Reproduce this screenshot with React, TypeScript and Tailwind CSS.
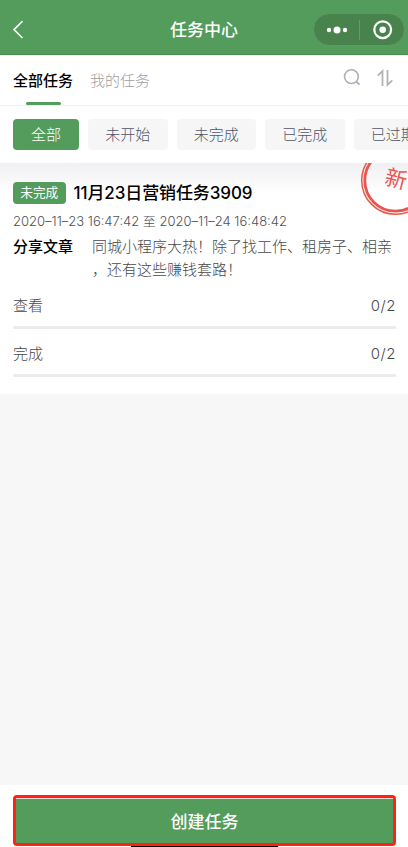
import clsx from 'clsx'

const filters = ['全部', '未开始', '未完成', '已完成', '已过期']

const progress = [
  { label: '查看', value: 0, total: 2 },
  { label: '完成', value: 0, total: 2 },
]

function Header() {
  return (
    <header className="relative flex h-[55px] shrink-0 items-center justify-center border-b border-[#45944b] bg-[#549c5b] pt-1 text-white">
      <svg className="absolute left-[12px] top-[20px]" width="12" height="19" viewBox="0 0 12 19" fill="none" stroke="currentColor" strokeWidth="1.6">
        <path d="M10.500 1.200 2 9.600l8.500 8.400" />
      </svg>
      <h1 className="pt-[1px] text-[17px] leading-6 font-medium">任务中心</h1>
      <div className="absolute left-[313px] top-[13px] flex h-[33px] w-[92px] items-center rounded-full border border-[#5d9a62] bg-[#48824d]">
        <svg width="90" height="31" viewBox="0 0 90 31" fill="currentColor">
          <circle cx="15" cy="16" r="2.200" />
          <circle cx="23" cy="16" r="3.500" />
          <circle cx="31" cy="16" r="2.200" />
          <path d="M45.500 6v20" stroke="#659b69" strokeWidth="1" />
          <circle cx="68.700" cy="15.700" r="8.400" fill="none" stroke="currentColor" strokeWidth="2.200" />
          <circle cx="68.700" cy="15.700" r="3.300" />
        </svg>
      </div>
    </header>
  )
}

function Tabs() {
  return (
    <nav className="flex h-[51px] shrink-0 border-b border-[#f0f0f0] pl-[13px] text-[15px] leading-6">
      <div className="flex flex-col items-center pt-[14px]">
        <span className="font-medium text-black">全部任务</span>
        <span className="mt-[9px] h-[3px] w-[35px] rounded-full bg-[#549c5b]" />
      </div>
      <span className="ml-[17px] pt-[14px] font-light text-[#a0a0a0]">我的任务</span>
      <svg className="mt-[12px] mr-[8px] ml-auto" width="60" height="22" viewBox="0 0 60 22" fill="none">
        <circle cx="11.400" cy="9.600" r="6.900" stroke="#abb0b8" strokeWidth="1.600" />
        <path d="m16.200 14.300 3.300 3.400" stroke="#abb0b8" strokeWidth="1.800" />
        <path d="M42.500 19V4l-4.800 4.600M47.500 3v15l4.800-4.600" stroke="#b3b3b3" strokeWidth="1.800" />
      </svg>
    </nav>
  )
}

function Filters() {
  return (
    <div className="flex h-[57px] shrink-0 gap-[9px] overflow-hidden pt-[13px] pl-[13px] text-[15px] font-light">
      {filters.map((name, i) => (
        <button
          key={name}
          className={clsx(
            'h-[31px] shrink-0 rounded-[4px] leading-[31px]',
            i === 0 ? 'w-[66px] bg-[#549c5b] text-white' : 'w-[79.500px] bg-[#f6f6f6] text-[#4f566a]'
          )}
        >
          {name}
        </button>
      ))}
    </div>
  )
}

function Stamp() {
  return (
    <div className="absolute top-0 right-0 h-[54px] w-[50px] overflow-hidden font-normal text-[#e85650]">
      <svg width="50" height="54" viewBox="0 0 50 54" fill="none" stroke="currentColor">
        <circle cx="37.500" cy="17.500" r="33.800" strokeWidth="1.500" />
        <circle cx="37.500" cy="17.500" r="30.700" strokeWidth="2.800" />
      </svg>
      <span className="absolute top-[4px] left-[27px] rotate-[14deg] text-[22px] leading-6">新</span>
    </div>
  )
}

function TaskCard() {
  return (
    <section className="relative h-[231px] shrink-0 bg-white pt-[19px] pr-[12px] pl-[13px] text-[15px] font-light text-[#484848]">
      <div className="absolute inset-x-0 top-0 h-[30px] bg-gradient-to-b from-[#f0f0f2] to-white" />
      <Stamp />
      <div className="relative flex h-[22px] items-center">
        <span className="h-[22px] w-[52.500px] rounded-[4px] bg-[#549c5b] text-center text-[12.700px] leading-[22px] font-normal text-white">未完成</span>
        <h2 className="ml-[8px] text-[17px] leading-6 font-medium tracking-[-0.1px] whitespace-nowrap text-black">11月23日营销任务3909</h2>
      </div>
      <p className="mt-[7px] text-[13px] leading-5 whitespace-nowrap text-[#505050]">2020–11–23 16:47:42 至 2020–11–24 16:48:42</p>
      <div className="mt-[4px] flex leading-[23px]">
        <span className="w-[79px] shrink-0 font-medium text-black">分享文章</span>
        <p className="whitespace-nowrap">
          同城小程序大热！除了找工作、租房子、相亲
          <br />
          ，还有这些赚钱套路！
        </p>
      </div>
      <div className="mt-[13px] flex flex-col gap-[13px]">
        {progress.map(({ label, value, total }) => (
          <div key={label}>
            <div className="flex justify-between leading-6">
              <span>{label}</span>
              <span className="tracking-[0.5px]">{value}/{total}</span>
            </div>
            <div className="mt-[8px] h-[3px] overflow-hidden rounded-full bg-[#ebebeb]">
              <div className="h-full bg-[#549c5b]" style={{ width: `${(value / total) * 100}%` }} />
            </div>
          </div>
        ))}
      </div>
    </section>
  )
}

export default function App() {
  return (
    <div className="flex h-[847px] w-[408px] flex-col overflow-hidden bg-white font-[Inter,'Noto_Sans_CJK_SC',sans-serif]">
      <Header />
      <Tabs />
      <Filters />
      <TaskCard />
      <main className="flex-1 bg-[#f7f7f7]" />
      <footer className="relative h-[62px] shrink-0 bg-white pt-[10px] pr-[12px] pl-[13px]">
        <div className="absolute bottom-0 left-[131px] h-[2px] w-[147px] bg-black" />
        <button className="relative block h-[51px] w-full rounded-[4px] border-[3px] border-[#ff2114] bg-[#549c5b] text-[17px] font-medium text-white">
          <span className="block h-full border-t border-[#e5dcd0] pt-[11px] leading-6">创建任务</span>
        </button>
      </footer>
    </div>
  )
}
